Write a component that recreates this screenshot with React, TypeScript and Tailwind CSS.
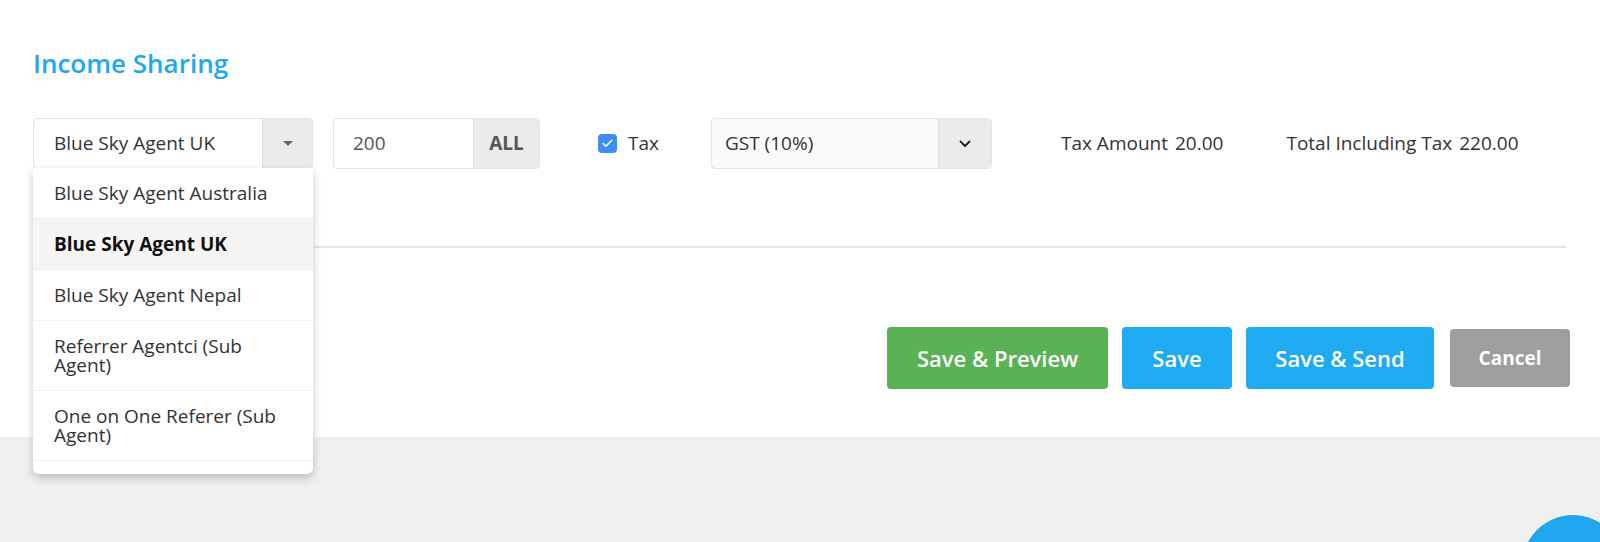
import { Check } from 'lucide-react'

const agents = [
  { name: 'Blue Sky Agent Australia' },
  { name: 'Blue Sky Agent UK', active: true },
  { name: 'Blue Sky Agent Nepal' },
  { name: 'Referrer Agentci (Sub Agent)' },
  { name: 'One on One Referer (Sub Agent)' },
]

function AgentSelect() {
  return (
    <div className="relative w-[280px] shrink-0">
      <div className="flex h-[51px] rounded-[4px] border border-[#e4e4e4] bg-white">
        <div className="flex flex-1 items-center pl-[20px] text-[#333]">Blue Sky Agent UK</div>
        <div className="flex w-[50px] items-center justify-center rounded-r-[4px] border-l border-[#dedede] bg-[#ebebeb]">
          <span className="h-0 w-0 border-x-[5px] border-t-[5px] border-x-transparent border-t-[#666]" />
        </div>
      </div>
      <ul className="absolute left-0 top-[50px] z-10 w-[280px] overflow-hidden rounded-b-[6px] bg-white pb-[13px] shadow-[0_4px_10px_rgba(0,0,0,0.22)]">
        {agents.map((a) => (
          <li
            key={a.name}
            className={
              a.active
                ? 'border-b border-[#f1f1f1] bg-[#f5f5f5] px-[21px] pb-[15px] pt-[16px] font-bold leading-[19px] text-[#111]'
                : 'border-b border-[#f1f1f1] px-[21px] pb-[15px] pt-[16px] leading-[19px] text-[#333]'
            }
          >
            {a.name}
          </li>
        ))}
      </ul>
    </div>
  )
}

export default function App() {
  return (
    <div className="relative min-h-[542px] w-full overflow-hidden bg-[#f0f0f0] font-['Open_Sans',sans-serif] text-[19px]">
      <div className="bg-white px-[33px] pb-[48px] pt-[50px]">
        <h2 className="text-[26px] font-semibold leading-[26px] text-[#1ea8f0]">Income Sharing</h2>

        <div className="mt-[42px] flex items-center">
          <AgentSelect />

          <div className="ml-[20px] flex h-[51px] w-[207px] rounded-[4px] border border-[#e4e4e4] bg-white">
            <div className="flex flex-1 items-center pl-[19px] text-[#555]">200</div>
            <div className="flex w-[66px] items-center justify-center rounded-r-[4px] border-l border-[#dedede] bg-[#ebebeb] font-bold text-[#555]">
              ALL
            </div>
          </div>

          <label className="ml-[58px] flex items-center gap-[11px] text-[#333]">
            <span className="flex h-[19px] w-[19px] items-center justify-center rounded-[4px] bg-[#3a8ef6]">
              <Check className="h-[13px] w-[13px] text-white" strokeWidth={3} />
            </span>
            Tax
          </label>

          <div className="ml-[52px] flex h-[51px] w-[281px] rounded-[4px] border border-[#e4e4e4] bg-[#fafafa]">
            <div className="flex flex-1 items-center pl-[13px] text-[#333]">GST (10%)</div>
            <div className="flex w-[53px] items-center justify-center rounded-r-[4px] border-l border-[#dedede] bg-[#ebebeb]">
              <svg width="12" height="8" viewBox="0 0 12 8" fill="none">
                <path d="M1.5 1.5 6 6l4.5-4.5" stroke="#222" strokeWidth="1.8" strokeLinecap="round" strokeLinejoin="round" />
              </svg>
            </div>
          </div>

          <div className="ml-[69px] text-[#333]">
            Tax Amount<span className="ml-[7px]">20.00</span>
          </div>
          <div className="ml-[63px] text-[#333]">
            Total Including Tax<span className="ml-[7px]">220.00</span>
          </div>
        </div>

        <div className="mt-[77px] h-[2px] bg-[#e6e6e6]" />

        <div className="-mr-[3px] mt-[79px] flex items-center justify-end gap-[14px]">
          <button className="h-[62px] w-[221px] rounded-[4px] bg-[#59b253] text-[22px] font-semibold text-white">Save &amp; Preview</button>
          <button className="h-[62px] w-[110px] rounded-[4px] bg-[#1fabf1] text-[22px] font-semibold text-white">Save</button>
          <button className="h-[62px] w-[188px] rounded-[4px] bg-[#1fabf1] text-[22px] font-semibold text-white">Save &amp; Send</button>
          <button className="ml-[2px] h-[58px] w-[120px] rounded-[4px] bg-[#9e9e9e] text-[19px] font-bold text-white">Cancel</button>
        </div>
      </div>

      <div className="absolute left-[1522px] top-[515px] h-[102px] w-[102px] rounded-full bg-[#1fa6ef]" />
    </div>
  )
}
